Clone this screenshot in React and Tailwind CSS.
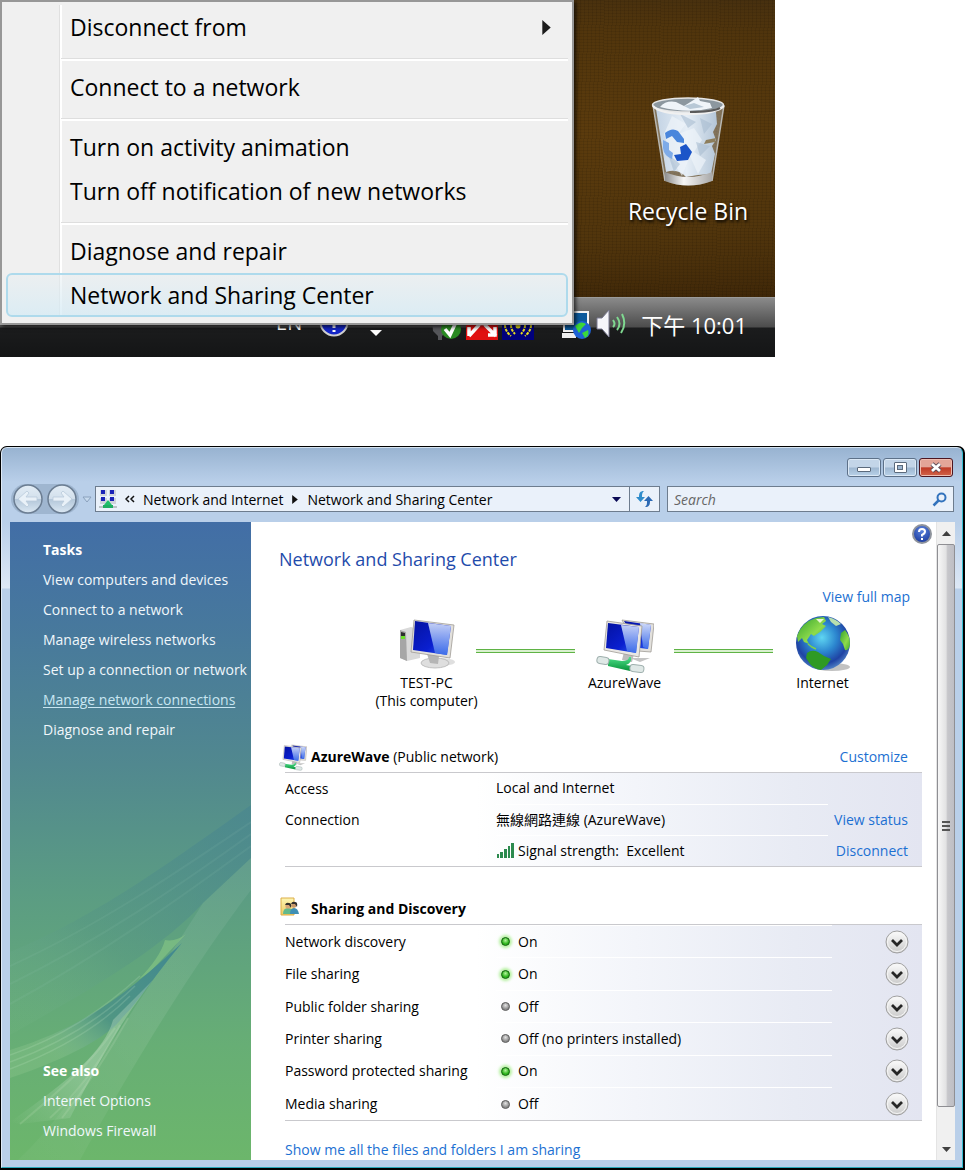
import React from 'react';

const menuGroups = [
  [{ label: 'Disconnect from', submenu: true }],
  [{ label: 'Connect to a network' }],
  [{ label: 'Turn on activity animation' }, { label: 'Turn off notification of new networks' }],
  [{ label: 'Diagnose and repair' }, { label: 'Network and Sharing Center', active: true }],
];

const tasks = [
  'View computers and devices',
  'Connect to a network',
  'Manage wireless networks',
  'Set up a connection or network',
  'Manage network connections',
  'Diagnose and repair',
];

const sharing = [
  { name: 'Network discovery', on: true, text: 'On' },
  { name: 'File sharing', on: true, text: 'On' },
  { name: 'Public folder sharing', on: false, text: 'Off' },
  { name: 'Printer sharing', on: false, text: 'Off (no printers installed)' },
  { name: 'Password protected sharing', on: true, text: 'On' },
  { name: 'Media sharing', on: false, text: 'Off' },
];

function Defs() {
  return (
    <svg className="absolute h-0 w-0" aria-hidden="true">
      <defs>
        <linearGradient id="screen" x1="0" y1="0" x2="1" y2="1">
          <stop offset="0" stopColor="#0412a0" />
          <stop offset="0.6" stopColor="#0a1fd0" />
          <stop offset="1" stopColor="#2f62ee" />
        </linearGradient>
        <linearGradient id="glare" x1="0" y1="0" x2="0" y2="1">
          <stop offset="0" stopColor="#e4efff" />
          <stop offset="1" stopColor="#3f70ea" />
        </linearGradient>
        <linearGradient id="metal" x1="0" y1="0" x2="1" y2="0">
          <stop offset="0" stopColor="#8f8f8f" />
          <stop offset="0.4" stopColor="#f6f6f6" />
          <stop offset="1" stopColor="#a9a9a9" />
        </linearGradient>
        <linearGradient id="plug" x1="0" y1="0" x2="0" y2="1">
          <stop offset="0" stopColor="#4fe08a" />
          <stop offset="1" stopColor="#07933a" />
        </linearGradient>
        <radialGradient id="sea" cx="0.48" cy="0.4" r="0.6">
          <stop offset="0" stopColor="#5fd6f2" />
          <stop offset="0.45" stopColor="#2c86cf" />
          <stop offset="0.8" stopColor="#1f43a4" />
          <stop offset="1" stopColor="#4f7fc4" />
        </radialGradient>
        <linearGradient id="land" x1="0" y1="0" x2="1" y2="1">
          <stop offset="0" stopColor="#2fa02c" />
          <stop offset="0.6" stopColor="#8edb4c" />
          <stop offset="1" stopColor="#3fae2c" />
        </linearGradient>
        <linearGradient id="paper" x1="0" y1="0" x2="1" y2="0">
          <stop offset="0" stopColor="#c3d3e4" />
          <stop offset="0.5" stopColor="#e6eef6" />
          <stop offset="1" stopColor="#b4c6d8" />
        </linearGradient>
        <linearGradient id="knob" x1="0" y1="0" x2="0" y2="1">
          <stop offset="0" stopColor="#e3edf6" />
          <stop offset="0.48" stopColor="#d3e0ec" />
          <stop offset="0.52" stopColor="#b4c7da" />
          <stop offset="1" stopColor="#dbe8f3" />
        </linearGradient>
        <radialGradient id="helpBlue" cx="0.5" cy="0.3" r="0.7">
          <stop offset="0" stopColor="#5c84dd" />
          <stop offset="1" stopColor="#1a3a9e" />
        </radialGradient>
        <linearGradient id="chevron" x1="0" y1="0" x2="0" y2="1">
          <stop offset="0" stopColor="#fdfdfd" />
          <stop offset="1" stopColor="#c9c9c9" />
        </linearGradient>
        <linearGradient id="folder" x1="0" y1="0" x2="0" y2="1">
          <stop offset="0" stopColor="#fdf6b4" />
          <stop offset="1" stopColor="#eec85f" />
        </linearGradient>
      </defs>
    </svg>
  );
}

function RecycleBin() {
  return (
    <svg viewBox="0 0 76 94" className="h-[94px] w-[76px]" aria-hidden="true">
      <path d="M3 11 L15 87 Q38 96 62 87 L74 11Z" fill="#d8e2ea" opacity="0.35" />
      <path d="M6 15 L16 78 Q28 74 36 83 L48 81 L61 80 L65 60 L62 52 L66 46 L63 38 L67 30 L66 18Z" fill="url(#paper)" />
      <path d="M22 22 L36 30 L28 40 L44 34 L52 46 L44 58 L56 66 L48 80 L40 62 L32 82 L22 66 L14 40Z" fill="#eef4fa" opacity="0.7" />
      <path d="M50 24 L62 30 L54 40 Z M46 48 L60 52 L50 62 Z M30 20 L46 28 L38 34Z M18 60 L30 70 L24 78Z" fill="#a9bdd1" opacity="0.6" />
      <path d="M56 46 L66 44 L65 48 L54 50Z" fill="#8d7e5c" />
      <path d="M3 11 L15 87 M74 11 L62 87" stroke="#b8b8b4" strokeWidth="1.5" fill="none" />
      <path d="M15 78 Q38 88 62 78 L62 87 Q38 96 15 87Z" fill="url(#metal)" />
      <ellipse cx="38" cy="11" rx="35.5" ry="7" fill="#8c979f" stroke="#e6e6e6" strokeWidth="1.5" />
      <path d="M10 13 Q16 6 26 8 L34 12 L42 7 L48 3 L50 7 L60 9 L62 14 Q38 20 10 13Z" fill="#eff4f9" />
      <path d="M34 12 L44 9 L54 13 L40 15Z" fill="#b8c8d6" />
      <path d="M3 12 Q10 20 38 20 Q66 20 74 12" fill="none" stroke="#f0f0f0" strokeWidth="2" />
      <path d="M40 18 Q62 18 70 14" fill="none" stroke="#5a5a5a" strokeWidth="2" />
      <path d="M15 39 Q22 33 28 37 L34 45 L34 49 L27 48 L22 42 L16 45Z" fill="#4a86dc" />
      <path d="M13 46 L19 49 L19 56 L23 59 L22 65 Q14 62 13 54Z" fill="#7eabe8" />
      <path d="M30 53 L36 50 L42 58 L38 66 L27 67 L24 61 L31 60Z" fill="#1c55c8" />
    </svg>
  );
}

function Computer() {
  return (
    <svg viewBox="0 0 58 58" className="h-[58px] w-[58px]" aria-hidden="true">
      <ellipse cx="42" cy="46" rx="15" ry="4" fill="#c9c9c9" opacity="0.6" />
      <path d="M2 14 L13 11 L22 14 L22 42 L9 45 L2 42Z" fill="#d9d9d9" />
      <path d="M2 14 L8 16 L9 45 L2 42Z" fill="#a6a6a6" />
      <path d="M3 16 L7 17 L7 23 L3 22Z" fill="#2c2c2c" />
      <path d="M3 20h4v3H3z" fill="#6adf2a" />
      <ellipse cx="37" cy="47" rx="14" ry="5" fill="#dedede" stroke="#b4b4b4" strokeWidth="0.8" />
      <path d="M29 38 L41 40 L40 48 L32 47Z" fill="#b5b5b5" />
      <path d="M16 4 L56 9 L52 42 L13 36Z" fill="#e2e0dc" stroke="#a09c96" strokeWidth="0.8" />
      <path d="M17 5 L53 10 L49 39 L15 34Z" fill="url(#screen)" />
      <path d="M30 7 L53 10 L49 39 L37 37Z" fill="url(#glare)" opacity="0.85" />
    </svg>
  );
}

function NetworkPcs({ className }) {
  return (
    <svg viewBox="0 0 58 58" className={className} aria-hidden="true">
      <path d="M26 4 L58 8 L55 36 L42 35Z" fill="#e2e0dc" stroke="#a09c96" strokeWidth="0.8" />
      <path d="M28 5 L55 9 L52 33 L44 32Z" fill="url(#screen)" />
      <path d="M44 7 L55 9 L52 33 L47 31Z" fill="url(#glare)" opacity="0.9" />
      <path d="M34 42 L54 42 L44 46Z" fill="#c4c4c4" />
      <path d="M28 36 L38 38 L36 46 L26 44Z" fill="#bdbdbd" />
      <path d="M11 5 L46 10 L43 41 L8 34Z" fill="#e9e7e3" stroke="#a09c96" strokeWidth="0.8" />
      <path d="M12 7 L43 11 L40 37 L10 32Z" fill="url(#screen)" />
      <path d="M25 9 L43 11 L40 37 L31 35Z" fill="url(#glare)" opacity="0.85" />
      <path d="M12 43 L26 45 Q33 45 33 41 L35 41 Q36 47 30 49 L36 50 L34 55 L12 50Z" fill="url(#plug)" />
      <rect x="1" y="41" width="12" height="7" rx="3" fill="#dfe8e6" stroke="#9fb0ae" transform="rotate(10 7 44)" />
      <rect x="34" y="49" width="14" height="7" rx="3" fill="#dfe8e6" stroke="#9fb0ae" transform="rotate(8 41 52)" />
    </svg>
  );
}

function Globe({ className }) {
  return (
    <svg viewBox="0 0 58 58" className={className} aria-hidden="true">
      <ellipse cx="38" cy="51" rx="18" ry="4" fill="#9a9a9a" opacity="0.6" />
      <circle cx="29" cy="27" r="27" fill="url(#sea)" />
      <path d="M3 20 Q8 6 22 2 L30 1 L32 5 L28 8 L32 10 L26 16 L20 20 L17 18 L13 24 L15 28 L10 26 L8 22 L4 26Z" fill="url(#land)" />
      <path d="M34 1 Q42 3 47 8 L42 10 L37 6Z" fill="#b7dfae" />
      <path d="M51 14 Q56 20 56 28 Q55 35 51 34 L49 28 L46 24 L47 17Z" fill="url(#land)" />
      <path d="M13 37 Q18 33 24 36 L30 40 L37 43 L33 49 L27 54 Q20 53 16 48 L12 42Z" fill="#2f9a24" />
      <path d="M14 28 L18 31 L22 33" stroke="#7fd04a" strokeWidth="1.5" fill="none" />
      <path d="M22 3 L30 3 L26 7Z" fill="#e9f6d8" />
    </svg>
  );
}

function SidebarSwoosh() {
  return (
    <svg viewBox="0 0 241 360" preserveAspectRatio="none" className="absolute bottom-0 left-0 h-[360px] w-full" aria-hidden="true">
      <defs>
        <linearGradient id="swTeal" x1="1" y1="0" x2="0" y2="1">
          <stop offset="0" stopColor="#4a878f" stopOpacity="0.8" />
          <stop offset="0.6" stopColor="#4f8d88" stopOpacity="0.25" />
          <stop offset="1" stopColor="#8fc89a" stopOpacity="0.05" />
        </linearGradient>
        <linearGradient id="swLight" x1="1" y1="0" x2="0" y2="1">
          <stop offset="0" stopColor="#ffffff" stopOpacity="0.06" />
          <stop offset="0.5" stopColor="#ffffff" stopOpacity="0.08" />
          <stop offset="1" stopColor="#ffffff" stopOpacity="0.03" />
        </linearGradient>
        <linearGradient id="swWedge" x1="1" y1="0" x2="0" y2="1">
          <stop offset="0.1" stopColor="#438a8e" />
          <stop offset="0.5" stopColor="#4b9186" stopOpacity="0.8" />
          <stop offset="0.8" stopColor="#9ccf98" stopOpacity="0.25" />
        </linearGradient>
        <linearGradient id="swBright" x1="1" y1="0" x2="0" y2="1">
          <stop offset="0" stopColor="#c4e2c8" stopOpacity="0.3" />
          <stop offset="0.5" stopColor="#c4e2c8" stopOpacity="0.4" />
          <stop offset="1" stopColor="#c4e2c8" stopOpacity="0" />
        </linearGradient>
      </defs>
      <path d="M241 5 C170 55 90 115 0 152 L0 235 C80 190 150 150 193 103 L241 58Z" fill="url(#swTeal)" />
      <path d="M241 22 C170 70 90 125 0 166 M241 34 C170 85 90 140 0 184 M241 46 C170 98 90 155 0 204" stroke="#9fd0b8" strokeOpacity="0.1" strokeWidth="2" fill="none" />
      <path d="M241 58 L193 103 C170 140 130 200 90 260 C60 300 40 330 8 360 L70 360 C120 270 180 170 241 90Z" fill="url(#swLight)" />
      <path d="M155 140 Q150 158 128 180 L140 172 L176 134 Q166 142 155 140Z" fill="#8fcf86" opacity="0.5" />
      <path d="M172 143 C120 190 80 225 0 250 L0 278 C60 258 100 235 112 218 C130 200 145 175 172 143Z" fill="url(#swWedge)" />
      <path d="M130 176 C90 212 50 238 0 255 M125 186 C90 220 50 244 0 262 M120 196 C90 226 50 250 0 269" stroke="#cdeccb" strokeOpacity="0.18" strokeWidth="1.5" fill="none" />
      <path d="M143 180 L103 220 C95 250 60 280 0 322 L10 324 L60 318 C75 290 100 235 143 180Z" fill="url(#swBright)" />
      <path d="M110 225 C90 265 60 300 40 318 M105 228 C80 265 50 290 10 324 M118 218 C95 260 70 295 52 318" stroke="#e0f4d8" strokeOpacity="0.14" strokeWidth="2" fill="none" />
    </svg>
  );
}

function StatusDot({ on }) {
  return on ? (
    <span className="mx-[5px] h-[9px] w-[9px] shrink-0 rounded-full border border-[#12620c] bg-[radial-gradient(circle_at_50%_35%,#b4f59c,#2cb31b_60%)] shadow-[0_0_3px_2px_#b3f09d]" />
  ) : (
    <span className="mx-[5px] h-[9px] w-[9px] shrink-0 rounded-full border border-[#5f5f5f] bg-[radial-gradient(circle_at_50%_35%,#e4e4e4,#8a8a8a_65%)]" />
  );
}

function Desktop() {
  return (
    <section className="relative flex w-full max-w-[775px] flex-col overflow-hidden bg-[#4b300c]">
      <div className="flex h-[297px] justify-end bg-[repeating-linear-gradient(92deg,#00000014_0_1px,transparent_1px_4px),repeating-linear-gradient(1deg,#00000012_0_1px,transparent_1px_3px),radial-gradient(ellipse_at_75%_45%,#5b3b0d_0,#51350c_45%,transparent_80%),linear-gradient(to_bottom,#3c2a12,#52350c_40%,#3b2407)] pr-[24px]">
        <button type="button" className="mt-[94px] flex h-fit w-[126px] flex-col items-center">
          <RecycleBin />
          <span className="mt-[8px] text-[23px] leading-[30px] whitespace-nowrap text-white [text-shadow:1px_2px_3px_#000]">Recycle Bin</span>
        </button>
      </div>
      <div className="flex h-[60px] justify-end border-t border-[#9b9b9b] bg-[linear-gradient(to_bottom,#8a8a8a,#4c4c4c_29px,#1b1c1d_30px,#141516)] pr-[28px] text-white">
        <div className="mt-[8px] flex h-[34px] items-end">
          <span className="mr-[17px] text-[20px] leading-[34px]">EN</span>
          <svg viewBox="0 0 30 30" className="mr-[21px] mb-[3px] h-[30px] w-[30px]" aria-hidden="true">
            <circle cx="15" cy="15" r="13.5" fill="#1426c8" stroke="#d0d0d0" strokeWidth="2" />
            <path d="M15 17v4M15 23v2" stroke="#fff" strokeWidth="3" />
          </svg>
          <svg viewBox="0 0 12 6" className="mr-[48px] mb-[4px] h-[6px] w-[12px]" aria-hidden="true">
            <path d="M0 0h12L6 6z" fill="#fff" />
          </svg>
          <svg viewBox="0 0 32 32" className="mr-[4px] h-[32px] w-[32px]" aria-hidden="true">
            <path d="M2 12h14v12l-4 4v4H8v-4l-5-5z" fill="#55565a" />
            <circle cx="21" cy="21" r="10" fill="#2a8a22" />
            <path d="M15 21l5 6 6-13" stroke="#fff" strokeWidth="3.5" fill="none" />
          </svg>
          <svg viewBox="0 0 32 32" className="mr-[4px] h-[32px] w-[32px]" aria-hidden="true">
            <path d="M0 0h32v32H0z" fill="#e01010" />
            <path d="M3 28V19M3 28L13 17M12 17q4-3 8 0M19 17L30 28M22 27h7v-8" stroke="#fff" strokeWidth="3.5" fill="none" />
          </svg>
          <svg viewBox="0 0 32 32" className="mr-[26px] h-[32px] w-[32px]" aria-hidden="true">
            <path d="M0 0h32v32H0z" fill="#00007c" />
            <circle cx="16" cy="18" r="2.5" fill="#ece11c" />
            <path d="M9 17q0 5 4 9M3 17q0 6 6 11M23 17q0 5-4 9M29 17q0 6-6 11" stroke="#ece11c" strokeWidth="2" strokeDasharray="3 1" fill="none" />
          </svg>
          <svg viewBox="0 0 32 32" className="mr-[4px] h-[32px] w-[32px]" aria-hidden="true">
            <path d="M4 4h24v19H4z" fill="#0c5a9c" stroke="#f3f3f3" strokeWidth="2" />
            <path d="M2 25h14v5H2z" fill="#eee" />
            <circle cx="22" cy="22" r="9" fill="#1d62d6" />
            <path d="M15 18q6-6 11-2l-4 4-3 5zM22 25l6-3q2 5-3 8z" fill="#3cd83a" />
          </svg>
          <svg viewBox="0 0 32 32" className="mr-[13px] h-[32px] w-[32px]" aria-hidden="true">
            <path d="M1 10h5L13 2v27L6 21H1z" fill="#f6f6fb" stroke="#7b7b92" />
            <path d="M17 12q3 4 0 7M21 9q5 7 0 13M26 6q5 10-1 19" stroke="#7fd890" strokeWidth="2" fill="none" />
          </svg>
          <span className="text-[22px] leading-[30px] whitespace-nowrap">下午 10:01</span>
        </div>
      </div>

      <div role="menu" className="absolute top-0 left-0 w-[574px] border-2 border-[#979797] bg-[#f0f0f0] px-[4px] pt-[3px] pb-[6px] shadow-[2px_2px_4px_#000000b0]">
        <div className="bg-[linear-gradient(to_right,transparent_53px,#e0e0e0_53px,#e0e0e0_54px,#fff_54px,#fff_56px,transparent_56px)]">
          {menuGroups.map((group, i) => (
            <div key={i}>
              {i > 0 && <div className="mt-[9px] mb-[4px] ml-[55px] h-[3px] border-t border-b-2 border-t-[#dedede] border-b-white" />}
              {group.map((item) => (
                <button
                  key={item.label}
                  type="button"
                  role="menuitem"
                  className={
                    item.active
                      ? 'flex h-[44px] w-full items-center rounded-[6px] border-2 border-[#aedaec] bg-[linear-gradient(to_bottom,#e8eef180,#d5ebf5c0)] pr-[15px] pl-[62px] text-left text-[23px]'
                      : 'flex h-[44px] w-full items-center border-2 border-transparent pr-[15px] pl-[62px] text-left text-[23px]'
                  }
                >
                  <span className="flex-1">{item.label}</span>
                  {item.submenu && (
                    <svg viewBox="0 0 9 16" className="h-[15px] w-[9px]" aria-hidden="true">
                      <path d="M0 0l9 8-9 8z" fill="#1c1c1c" />
                    </svg>
                  )}
                </button>
              ))}
            </div>
          ))}
        </div>
      </div>
    </section>
  );
}

function TitleBar() {
  const base = 'flex h-[19px] w-[34px] items-center justify-center rounded-[3px] border';
  return (
    <div className="flex h-[33px] justify-end gap-[2px] pt-[10px] pr-[2px]">
      <button type="button" aria-label="Minimize" className={`${base} border-[#5d7189] bg-[linear-gradient(to_bottom,#c3d5e8_48%,#9db6d0_52%,#b9d2e9)] shadow-[inset_0_0_0_1px_#dbe8f5]`}>
        <span className="mt-[4px] h-[5px] w-[14px] rounded-[1px] border border-[#5b6a7c] bg-white" />
      </button>
      <button type="button" aria-label="Maximize" className={`${base} border-[#5d7189] bg-[linear-gradient(to_bottom,#c3d5e8_48%,#9db6d0_52%,#b9d2e9)] shadow-[inset_0_0_0_1px_#dbe8f5]`}>
        <span className="flex h-[11px] w-[13px] items-center justify-center rounded-[1px] border border-[#5b6a7c] bg-white">
          <span className="h-[5px] w-[6px] border border-[#5b6a7c] bg-[#9db6d0]" />
        </span>
      </button>
      <button type="button" aria-label="Close" className={`${base} border-[#4d1620] bg-[linear-gradient(to_bottom,#e3a598_46%,#bf3a26_52%,#d1644a)] shadow-[inset_0_0_0_1px_#eebdb0]`}>
        <svg viewBox="0 0 14 11" className="h-[11px] w-[14px]" aria-hidden="true">
          <path d="M3 2l8 7M11 2l-8 7" stroke="#5b4a55" strokeWidth="4.5" />
          <path d="M3 2l8 7M11 2l-8 7" stroke="#fff" strokeWidth="2.8" />
        </svg>
      </button>
    </div>
  );
}

function AddressRow() {
  return (
    <div className="mb-[5px] flex h-[36px] items-center pr-[1px]">
      <div className="ml-[1px] flex h-[30px] shrink-0 gap-[4px] rounded-full bg-[#9fb6d0] px-[2px]">
        {['Back', 'Forward'].map((name) => (
          <button key={name} type="button" aria-label={name} className="h-[30px] w-[30px]">
            <svg viewBox="0 0 30 30" aria-hidden="true">
              <circle cx="15" cy="15" r="14" fill="url(#knob)" stroke="#6b7d92" strokeWidth="1.5" />
              <path
                d={name === 'Back' ? 'M5 15l9-8 2 2-3 4h11v4H13l3 4-2 2z' : 'M25 15l-9-8-2 2 3 4H6v4h11l-3 4 2 2z'}
                fill="#e9f1f8"
                stroke="#b9cadb"
                strokeWidth="0.8"
              />
            </svg>
          </button>
        ))}
      </div>
      <button type="button" aria-label="Recent pages" className="ml-[2px] flex h-[20px] w-[12px] items-center justify-center">
        <svg viewBox="0 0 10 7" className="h-[7px] w-[10px]" aria-hidden="true">
          <path d="M1 1h8L5 6z" fill="#c7daee" stroke="#8aa1bd" />
        </svg>
      </button>
      <div className="ml-[2px] flex h-[26px] min-w-0 flex-1 items-center border border-[#6d7c8e] bg-[#eaf1fa] text-[14px]">
        <svg viewBox="0 0 18 20" className="ml-[3px] h-[20px] w-[18px]" aria-hidden="true">
          <path d="M1 1h7v6H1zM10 1h7v6h-7zM1 9h7v6H1zM10 9h7v6h-7z" fill="#cfd3da" />
          <path d="M2 1h4v4H2zM11 1h4v4h-4zM2 8h4v4H2zM11 8h4v4h-4z" fill="#1a22b8" />
          <path d="M9 11l4 5v2H5v-2z" fill="#1fc06a" />
          <path d="M0 17h4v2H0zM14 17h4v2h-4z" fill="#b9c3c6" />
          <path d="M4 16h10v3H4z" fill="#1fae62" />
        </svg>
        <svg viewBox="0 0 10 8" className="mx-[8px] h-[8px] w-[10px]" aria-hidden="true">
          <path d="M4 1L1 4l3 3M9 1L6 4l3 3" stroke="#111" strokeWidth="1.5" fill="none" />
        </svg>
        <a href="#category" className="whitespace-nowrap">Network and Internet</a>
        <svg viewBox="0 0 5 8" className="mx-[9px] h-[9px] w-[6px]" aria-hidden="true">
          <path d="M0 0l5 4-5 4z" fill="#111" />
        </svg>
        <a href="#center" className="flex-1 whitespace-nowrap">Network and Sharing Center</a>
        <button type="button" aria-label="Previous locations" className="flex h-[24px] w-[25px] items-center justify-center">
          <svg viewBox="0 0 9 5" className="h-[5px] w-[9px]" aria-hidden="true">
            <path d="M0 0h9L4.5 5z" fill="#0a0a55" />
          </svg>
        </button>
        <button type="button" aria-label="Refresh" className="flex h-[24px] w-[30px] items-center justify-center border-l border-[#6d7c8e]">
          <svg viewBox="0 0 17 16" className="h-[16px] w-[17px]" aria-hidden="true">
            <path d="M8 0C4 0 3 2 3 6H0l4.5 5L9 6H6c0-3 0-4 2-6z" fill="#2f8ccb" />
            <path d="M9 16c4 0 5-2 5-6h3l-4.500-5L8 10h3c0 3 0 4-2 6z" fill="#2b69b4" />
          </svg>
        </button>
      </div>
      <div className="ml-[7px] flex h-[26px] w-[287px] items-center border border-[#6d7c8e] bg-[#eaf1fa] pr-[6px] pl-[6px]">
        <input type="search" aria-label="Search" placeholder="Search" className="min-w-0 flex-1 bg-transparent text-[14px] italic outline-none placeholder:text-[#666]" />
        <svg viewBox="0 0 15 15" className="h-[15px] w-[15px]" aria-hidden="true">
          <circle cx="9.5" cy="5.5" r="4" stroke="#3273bd" strokeWidth="2" fill="none" />
          <path d="M6.5 8.5L1.5 13.5" stroke="#3273bd" strokeWidth="2.5" />
        </svg>
      </div>
    </div>
  );
}

function Sidebar() {
  return (
    <aside className="relative w-[241px] shrink-0 overflow-hidden bg-[linear-gradient(to_bottom,#426ea6,#47789d_16%,#51888f_38%,#5b9c83_58%,#67ae75_82%,#6cb66b)] text-[14px] text-[#f0f7fb]">
      <SidebarSwoosh />
      <div className="relative flex h-full flex-col justify-between pt-[13px] pb-[14px] pl-[33px]">
        <nav className="flex flex-col items-start">
          <h2 className="leading-[30px] font-bold text-white">Tasks</h2>
          {tasks.map((t) => (
            <a
              key={t}
              href="#task"
              className={
                t === 'Manage network connections'
                  ? 'leading-[30px] whitespace-nowrap text-[#c8e6f2] underline underline-offset-2'
                  : 'leading-[30px] whitespace-nowrap'
              }
            >
              {t}
            </a>
          ))}
        </nav>
        <nav className="flex flex-col items-start">
          <h2 className="leading-[30px] font-bold text-white">See also</h2>
          <a href="#options" className="leading-[30px]">Internet Options</a>
          <a href="#firewall" className="leading-[30px]">Windows Firewall</a>
        </nav>
      </div>
    </aside>
  );
}

function Link({ children }) {
  return (
    <a href="#link" className="whitespace-nowrap text-[#1c70d2]">
      {children}
    </a>
  );
}

function NetworkMap() {
  const line = <div className="mt-[33px] h-[4px] border-y border-[#5fb345] bg-[#d9f0cf]" />;
  return (
    <div className="mt-[9px] mr-[50px] ml-[98px] grid grid-cols-5 leading-[18px]">
      <div className="flex flex-col items-center">
        <Computer />
        <span>TEST-PC</span>
        <span className="whitespace-nowrap">(This computer)</span>
      </div>
      {line}
      <div className="flex flex-col items-center">
        <NetworkPcs className="h-[58px] w-[58px]" />
        <span>AzureWave</span>
      </div>
      {line}
      <div className="flex flex-col items-center">
        <Globe className="h-[58px] w-[58px]" />
        <span>Internet</span>
      </div>
    </div>
  );
}

const panel = 'ml-[6px] border-y border-[#c9c9cd] bg-[linear-gradient(to_right,#fff_30%,#f3f5fa_55%,#e8ebf4_80%,#e3e5f1)]';

function ConnectionPanel() {
  return (
    <section className="mt-[32px]">
      <div className="flex h-[30px] items-center justify-between pr-[14px]">
        <h2 className="flex items-center">
          <NetworkPcs className="h-[28px] w-[28px]" />
          <span className="ml-[4px] whitespace-pre">
            <b>AzureWave</b> (Public network)
          </span>
        </h2>
        <Link>Customize</Link>
      </div>
      <div className={panel}>
        <table className="w-full table-fixed">
          <colgroup>
            <col className="w-[211px]" />
            <col />
            <col className="w-[94px]" />
          </colgroup>
          <tbody>
            <tr className="h-[31px]">
              <th scope="row" className="text-left font-normal">Access</th>
              <td className="border-b border-white">Local and Internet</td>
              <td />
            </tr>
            <tr className="h-[31px]">
              <th scope="row" className="text-left font-normal">Connection</th>
              <td className="border-b border-white">無線網路連線 (AzureWave)</td>
              <td className="pr-[14px] text-right"><Link>View status</Link></td>
            </tr>
            <tr className="h-[31px]">
              <th scope="row" aria-label="Signal" />
              <td>
                <span className="flex items-center whitespace-pre">
                  <svg viewBox="0 0 18 15" className="mr-[4px] h-[15px] w-[18px]" aria-hidden="true">
                    <path d="M1 11h2v4H1zM4 9h3v6H4zM8 6h3v9H8zM12 3h2v12h-2zM15 0h3v15h-3z" fill="#2c8a4e" />
                  </svg>
                  Signal strength:  Excellent
                </span>
              </td>
              <td className="pr-[14px] text-right"><Link>Disconnect</Link></td>
            </tr>
          </tbody>
        </table>
      </div>
    </section>
  );
}

function SharingPanel() {
  return (
    <section className="mt-[27px]">
      <h2 className="flex h-[30px] items-center font-bold">
        <svg viewBox="0 0 19 19" className="mr-[12px] mb-[6px] ml-[1px] h-[19px] w-[19px]" aria-hidden="true">
          <path d="M1 1h13v17H1z" fill="url(#folder)" stroke="#dcae48" />
          <path d="M3 17q0-6 5-6t5 6z" fill="#62b98c" />
          <path d="M10 17q0-6 4-6t5 6z" fill="#3f8fb4" />
          <circle cx="8" cy="9" r="2.6" fill="#d9a878" />
          <circle cx="14" cy="8" r="2.6" fill="#c9986a" />
          <path d="M5 8q1-3 4-2 3 0 2 5l-2-3zM11 7q1-3 4-2 3 0 2 5l-2-3z" fill="#33302c" />
        </svg>
        Sharing and Discovery
      </h2>
      <div className={panel}>
        <table className="h-[195px] w-full table-fixed">
          <colgroup>
            <col className="w-[211px]" />
            <col />
            <col className="w-[90px]" />
          </colgroup>
          <tbody>
            {sharing.map((row) => (
              <tr key={row.name}>
                <th scope="row" className="text-left font-normal whitespace-nowrap">{row.name}</th>
                <td className="border-t border-white">
                  <span className="flex items-center">
                    <StatusDot on={row.on} />
                    <span className="ml-[3px]">{row.text}</span>
                  </span>
                </td>
                <td>
                  <button type="button" aria-label={`Expand ${row.name}`} className="mr-[13px] ml-auto block h-[24px] w-[24px]">
                    <svg viewBox="0 0 24 24" aria-hidden="true">
                      <circle cx="12" cy="12" r="11" fill="url(#chevron)" stroke="#a0a0a0" />
                      <circle cx="12" cy="12" r="9.5" fill="none" stroke="#f6f6f6" />
                      <path d="M7 10l5 5 5-5" stroke="#262626" strokeWidth="2.8" fill="none" />
                    </svg>
                  </button>
                </td>
              </tr>
            ))}
          </tbody>
        </table>
      </div>
    </section>
  );
}

function ScrollBar() {
  return (
    <div className="flex w-[19px] shrink-0 flex-col items-center border-l border-[#e4e4e4] bg-[#f0f0f0]">
      <button type="button" aria-label="Scroll up" className="flex h-[22px] w-full items-center justify-center">
        <svg viewBox="0 0 9 5" className="h-[5px] w-[9px]" aria-hidden="true">
          <path d="M0 5h9L4.5 0z" fill="#404040" />
        </svg>
      </button>
      <div className="flex w-[18px] flex-1 flex-col items-center justify-center gap-[2px] rounded-[2px] border border-[#8f8f93] bg-[linear-gradient(to_right,#f7f7f7,#e2e2e3_50%,#c6c6ca_60%,#bebec4)]">
        <span className="h-[2px] w-[8px] bg-[#555]" />
        <span className="h-[2px] w-[8px] bg-[#555]" />
        <span className="h-[2px] w-[8px] bg-[#555]" />
      </div>
      <button type="button" aria-label="Scroll down" className="flex h-[53px] w-full items-end justify-center pb-[8px]">
        <svg viewBox="0 0 9 5" className="h-[5px] w-[9px]" aria-hidden="true">
          <path d="M0 0h9L4.5 5z" fill="#404040" />
        </svg>
      </button>
    </div>
  );
}

function ExplorerWindow() {
  return (
    <section className="rounded-t-[7px] border border-r-2 border-b-2 border-black bg-black">
      <div className="rounded-t-[6px] border border-t-[#d5e3f0] border-r-[#35bcd0] border-b-[#2ba9ba] border-l-[#dfeaf6] bg-[linear-gradient(to_bottom,#98b3d1,#b9cfe9_34px,#b9cfe9_74px,#dde8f6_140px,#b9cfe9_141px)] pr-[7px] pb-[7px] pl-[8px]">
        <TitleBar />
        <AddressRow />
        <div className="flex">
          <Sidebar />
          <main className="relative min-w-0 flex-1 bg-white pr-[14px] pl-[28px] text-[14px] leading-[20px]">
            <button type="button" aria-label="Help" className="absolute top-[2px] right-[4px] h-[20px] w-[20px]">
              <svg viewBox="0 0 20 20" aria-hidden="true">
                <circle cx="10" cy="10" r="9" fill="url(#helpBlue)" stroke="#8e939c" strokeWidth="2" />
                <path d="M7 8q0-3 3-3t3 2.500q0 2-3 3.500v1.500M10 14v2" stroke="#fff" strokeWidth="2" fill="none" />
              </svg>
            </button>
            <h1 className="pt-[25px] text-[18px] leading-[24px] text-[#1f4bab]">Network and Sharing Center</h1>
            <div className="mt-[16px] flex justify-end pr-[12px]">
              <Link>View full map</Link>
            </div>
            <NetworkMap />
            <ConnectionPanel />
            <SharingPanel />
            <div className="mt-[19px] ml-[6px]">
              <Link>Show me all the files and folders I am sharing</Link>
            </div>
          </main>
          <ScrollBar />
        </div>
      </div>
    </section>
  );
}

export default function App() {
  return (
    <div className="flex w-full flex-col gap-[89px] bg-white font-['Open_Sans','Noto_Sans_CJK_TC',sans-serif] text-black">
      <Defs />
      <Desktop />
      <ExplorerWindow />
    </div>
  );
}
